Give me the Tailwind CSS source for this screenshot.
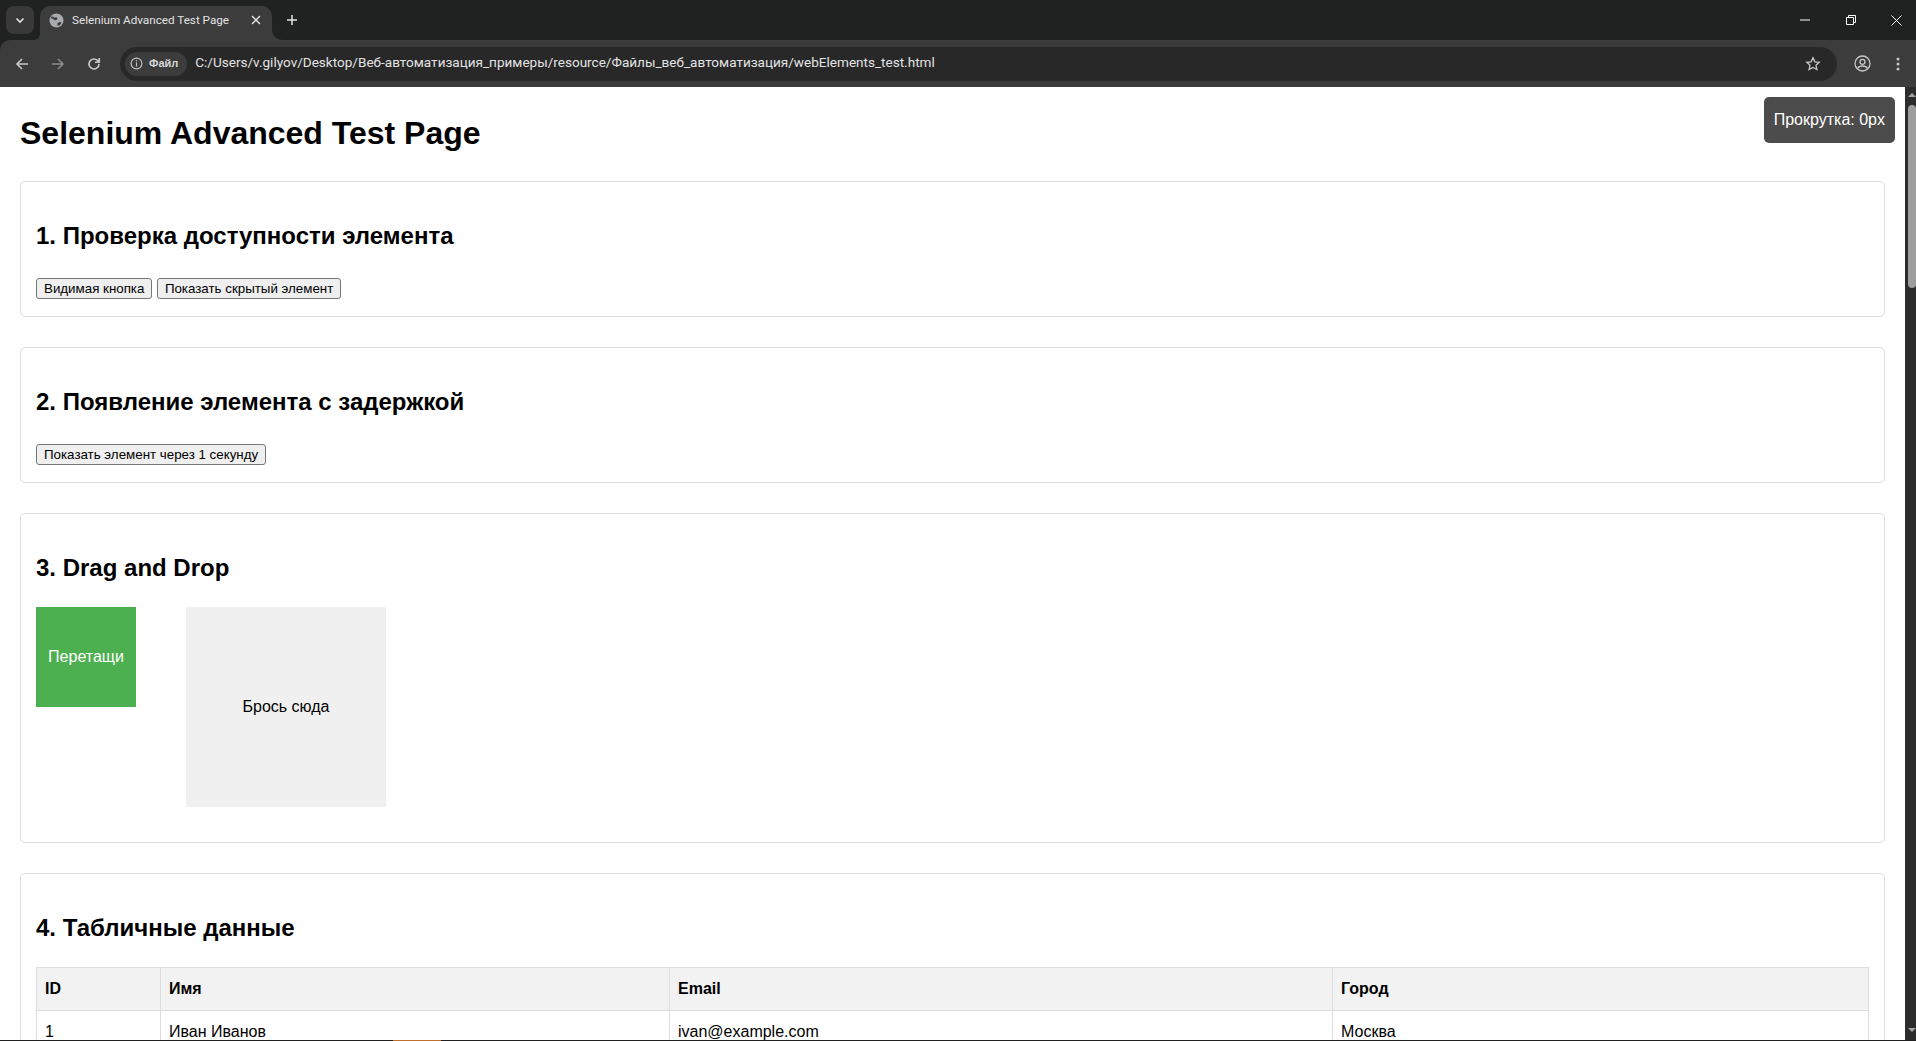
<!DOCTYPE html>
<html lang="ru">
<head>
<meta charset="utf-8">
<title>Selenium Advanced Test Page</title>
<script src="https://cdn.jsdelivr.net/npm/@tailwindcss/browser@4"></script>
</head>
<body class="h-screen overflow-hidden bg-white font-['Liberation_Sans',Arial,sans-serif] text-black">
<div class="flex flex-col h-[1040px] overflow-hidden">
    <!-- browser chrome -->
    <div class="shrink-0 bg-[#202222]">
        <!-- tab strip -->
        <div class="flex items-end h-10 text-[#e3e3e3]">
            <div class="relative z-10 flex items-center justify-center w-7 h-7 ml-1.5 mb-1.5 rounded-lg bg-[#383838]">
                <svg width="12" height="12" viewBox="0 0 12 12" fill="none" stroke="#e3e3e3" stroke-width="1.6"><path d="M2.5 4.5 6 8l3.5-3.5"/></svg>
            </div>
            <div class="relative flex items-center w-[232px] h-[34px] ml-1.5 pl-[9px] pr-[11px] pb-[6px] rounded-t-[10px] bg-[#3c3c3c]">
                <div class="absolute -left-[6px] bottom-0 w-[6px] h-[6px] bg-[#3c3c3c]"><div class="w-full h-full rounded-br-[6px] bg-[#202222]"></div></div>
                <div class="absolute -right-[10px] bottom-0 w-[10px] h-[10px] bg-[#3c3c3c]"><div class="w-full h-full rounded-bl-[10px] bg-[#202222]"></div></div>
                <svg width="15" height="15" viewBox="0 0 16 16" class="shrink-0"><circle cx="8" cy="8" r="7.5" fill="#a8abad"/><path d="M3 3.5l3 1.5 2-.5 1 1.5-1.500 2-2.500-1L2 5zM9 11l2-1.500 2.500.5-2 3-2.500.5z" fill="#3c3c3c"/></svg>
                <span class="ml-[8px] mt-[2px] font-['Roboto'] text-[11.7px] leading-none whitespace-nowrap">Selenium Advanced Test Page</span>
                <svg width="10" height="10" viewBox="0 0 10 10" fill="none" stroke="#e3e3e3" stroke-width="1.4" class="ml-auto"><path d="M1 1l8 8M9 1l-8 8"/></svg>
            </div>
            <svg width="12" height="12" viewBox="0 0 12 12" fill="none" stroke="#e3e3e3" stroke-width="1.5" class="ml-[14px] mb-[14px]"><path d="M6 1v10M1 6h10"/></svg>
            <div class="flex items-center ml-auto h-10 text-white">
                <svg width="10" height="10" viewBox="0 0 10 10" class="mr-[36px]" stroke="#fff" stroke-width="1"><path d="M0 5h10"/></svg>
                <svg width="10" height="10" viewBox="0 0 10 10" fill="none" class="mr-[35px]" stroke="#fff" stroke-width="1"><path d="M.5 2.500h7v7h-7zM2.500 2.500v-2h7v7h-2"/></svg>
                <svg width="11" height="11" viewBox="0 0 11 11" fill="none" class="mr-[14px]" stroke="#fff" stroke-width="1"><path d="M.5.5l10 10M10.500.5l-10 10"/></svg>
            </div>
        </div>
        <!-- toolbar -->
        <div class="flex items-center h-[47px] rounded-tl-[10px] bg-[#3c3c3c] text-[#c7c7c7]">
            <svg width="16" height="16" viewBox="0 0 16 16" fill="none" stroke="#c7c7c7" stroke-width="1.6" class="ml-[14px]"><path d="M14 8H3M8 3 3 8l5 5"/></svg>
            <svg width="16" height="16" viewBox="0 0 16 16" fill="none" stroke="#8a8a8a" stroke-width="1.6" class="ml-[20px]"><path d="M2 8h11M8 3l5 5-5 5"/></svg>
            <svg width="16" height="16" viewBox="0 0 16 16" fill="none" stroke="#c7c7c7" stroke-width="1.6" class="ml-[20px]"><path d="M13 8a5 5 0 1 1-1.500-3.600L13 6M13.300 2v4.300H9"/></svg>
            <div class="flex items-center flex-1 h-[34px] ml-[18px] pl-[5px] rounded-full bg-[#282828]">
                <div class="flex items-center h-6 pl-[5px] pr-[9px] rounded-full bg-[#3c3c3c]">
                    <svg width="13" height="13" viewBox="0 0 14 14" fill="none" stroke="#c7c7c7" stroke-width="1.2"><circle cx="7" cy="7" r="5.800"/><path d="M7 6v4.200M7 3.500v1.300"/></svg>
                    <span class="ml-[6px] text-[11px] leading-none font-bold text-[#d6d6d6]">Файл</span>
                </div>
                <span class="ml-2 mb-[2px] font-['Roboto'] text-[13.55px] leading-none whitespace-nowrap text-[#e3e3e3]">C:/Users/v.gilyov/Desktop/Веб-автоматизация_примеры/resource/Файлы_веб_автоматизация/webElements_test.html</span>
                <svg width="16" height="16" viewBox="0 0 16 16" fill="none" stroke="#c7c7c7" stroke-width="1.3" class="ml-auto mr-[16px]"><path d="m8 1.800 1.900 4 4.300.5-3.200 3 .9 4.300L8 11.500l-3.900 2.100.9-4.300-3.200-3 4.300-.5z"/></svg>
            </div>
            <svg width="17" height="17" viewBox="0 0 17 17" fill="none" stroke="#c7c7c7" stroke-width="1.3" class="ml-[17px]"><circle cx="8.500" cy="8.500" r="7.500"/><circle cx="8.500" cy="6.800" r="2.500"/><path d="M3.500 13.500c1-2 3-2.500 5-2.500s4 .5 5 2.500"/></svg>
            <svg width="4" height="14" viewBox="0 0 4 14" fill="#c7c7c7" class="ml-[25px] mr-[16px]"><circle cx="2" cy="2" r="1.500"/><circle cx="2" cy="7" r="1.500"/><circle cx="2" cy="12" r="1.500"/></svg>
        </div>
    </div>
    <!-- page + scrollbar -->
    <div class="relative flex flex-1 min-h-0 overflow-hidden">
        <main class="flex-1 min-w-0 pt-[21px] px-5 text-base leading-[1.6]">
            <h1 class="mb-[21.9px] text-[32px] font-bold">Selenium Advanced Test Page</h1>

            <section class="mb-[30px] rounded-[5px] border border-[#ddd] p-[15px]">
                <h2 class="my-[19.92px] text-[24px] font-bold">1. Проверка доступности элемента</h2>
                <button class="px-[7px] h-[21px] rounded-[3px] border border-[#767676] bg-[#efefef] text-[13.33px] leading-none">Видимая кнопка</button>
                <button class="px-[7px] h-[21px] rounded-[3px] border border-[#767676] bg-[#efefef] text-[13.33px] leading-none">Показать скрытый элемент</button>
            </section>

            <section class="mb-[30px] rounded-[5px] border border-[#ddd] p-[15px]">
                <h2 class="my-[19.92px] text-[24px] font-bold">2. Появление элемента с задержкой</h2>
                <button class="px-[7px] h-[21px] rounded-[3px] border border-[#767676] bg-[#efefef] text-[13.33px] leading-none">Показать элемент через 1 секунду</button>
            </section>

            <section class="mb-[30px] rounded-[5px] border border-[#ddd] p-[15px]">
                <h2 class="my-[19.92px] text-[24px] font-bold">3. Drag and Drop</h2>
                <div class="flex items-start gap-[50px] mb-5">
                    <div class="flex items-center justify-center w-[100px] h-[100px] bg-[#4caf50] text-white">Перетащи</div>
                    <div class="flex items-center justify-center w-[200px] h-[200px] bg-[#f0f0f0]">Брось сюда</div>
                </div>
            </section>

            <section class="mb-[30px] rounded-[5px] border border-[#ddd] p-[15px]">
                <h2 class="my-[19.92px] text-[24px] font-bold">4. Табличные данные</h2>
                <table class="w-full table-fixed border-collapse">
                    <thead>
                        <tr class="bg-[#f2f2f2]">
                            <th class="w-[124px] border border-[#ddd] p-2 text-left font-bold">ID</th>
                            <th class="w-[509px] border border-[#ddd] p-2 text-left font-bold">Имя</th>
                            <th class="w-[663px] border border-[#ddd] p-2 text-left font-bold">Email</th>
                            <th class="border border-[#ddd] p-2 text-left font-bold">Город</th>
                        </tr>
                    </thead>
                    <tbody>
                        <tr>
                            <td class="border border-[#ddd] p-2">1</td>
                            <td class="border border-[#ddd] p-2">Иван Иванов</td>
                            <td class="border border-[#ddd] p-2">ivan@example.com</td>
                            <td class="border border-[#ddd] p-2">Москва</td>
                        </tr>
                    </tbody>
                </table>
            </section>
        </main>

        <!-- scrollbar -->
        <div class="flex flex-col items-end w-[11px] shrink-0 bg-[#2c2c2c]">
            <div class="mt-[6px] w-0 h-0 border-x-[4px] border-b-[4px] border-x-transparent border-b-[#a3a3a3]"></div>
            <div class="mt-[8px] w-[8px] h-[183px] rounded-full bg-[#9e9e9e]"></div>
            <div class="mt-auto mb-[8px] w-0 h-0 border-x-[4px] border-t-[4px] border-x-transparent border-t-[#a3a3a3]"></div>
        </div>

        <!-- scroll indicator -->
        <div class="absolute top-[10px] right-[21px] rounded-[5px] bg-black/70 p-[10px] text-base leading-[1.6] text-white">Прокрутка: 0px</div>
    </div>
</div>
<div class="relative h-px bg-[#202020]">
    <div class="absolute left-[393px] top-0 w-[48px] h-px bg-[#c0702a]"></div>
</div>
</body>
</html>
